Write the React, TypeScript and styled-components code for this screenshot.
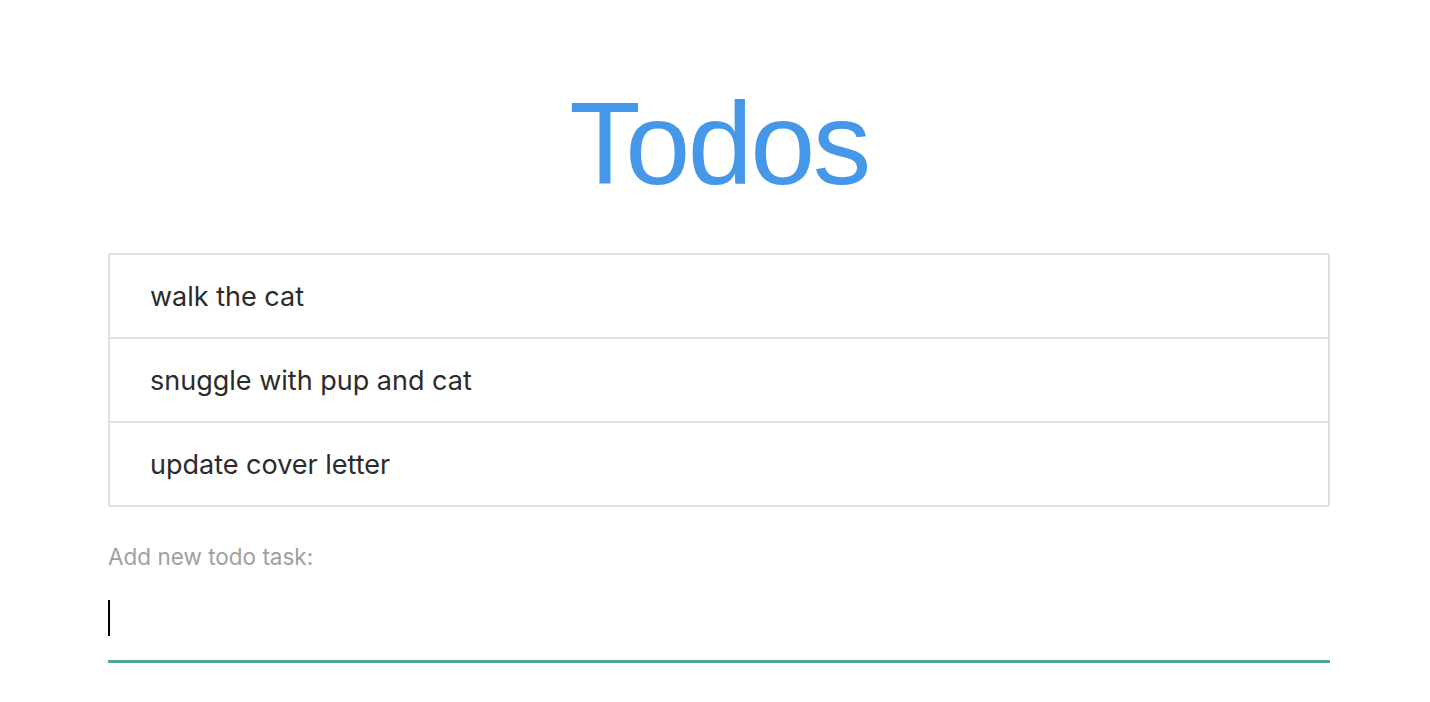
import React, { useEffect, useRef, useState } from "react";
import styled, { createGlobalStyle } from "styled-components";

const GlobalStyle = createGlobalStyle`
  html, body {
    margin: 0;
    padding: 0;
    background: #ffffff;
    font-family: Inter, "Liberation Sans", Arial, sans-serif;
  }
`;

const Page = styled.div`
  padding: 85px 100px 0 108px;
`;

const Title = styled.h1`
  margin: 0 0 51px;
  text-align: center;
  font-family: "Liberation Sans", Arial, sans-serif;
  font-size: 117px;
  font-weight: 400;
  line-height: 117px;
  letter-spacing: -2.5px;
  color: #4597ea;
`;

const List = styled.ul`
  list-style: none;
  margin: 0;
  padding: 0;
  border: 2px solid #e0e0e0;
  border-radius: 3px;
`;

const Item = styled.li`
  height: 82px;
  display: flex;
  align-items: center;
  padding: 0 40px;
  font-size: 27px;
  color: #2b2b2b;
  & + & {
    border-top: 2px solid #e0e0e0;
  }
`;

const Form = styled.form`
  margin-top: 37px;
  display: flex;
  flex-direction: column;
`;

const Label = styled.label`
  font-size: 22.5px;
  line-height: 26px;
  color: #a0a0a0;
`;

const InputWrap = styled.div`
  position: relative;
  margin-top: 24px;
  display: flex;
`;

const Input = styled.input`
  flex: 1;
  box-sizing: content-box;
  margin: 0;
  height: 48px;
  padding: 0 0 18px;
  border: none;
  border-bottom: 3px solid #4fa59a;
  outline: none;
  font-size: 28px;
  font-family: inherit;
  caret-color: #000;
  color: #222;
  background: transparent;
`;

const Caret = styled.span`
  position: absolute;
  left: 0;
  top: 6px;
  width: 2px;
  height: 36px;
  background: #000;
  pointer-events: none;
`;

const todos = ["walk the cat", "snuggle with pup and cat", "update cover letter"];

export default function App() {
  const [value, setValue] = useState("");
  const inputRef = useRef<HTMLInputElement>(null);

  useEffect(() => {
    inputRef.current?.focus();
  }, []);

  return (
    <>
      <GlobalStyle />
      <Page>
        <Title>Todos</Title>
        <List>
          {todos.map((t) => (
            <Item key={t}>{t}</Item>
          ))}
        </List>
        <Form onSubmit={(e) => e.preventDefault()}>
          <Label htmlFor="new-todo">Add new todo task:</Label>
          <InputWrap>
            <Input
              id="new-todo"
              ref={inputRef}
              value={value}
              onChange={(e) => setValue(e.target.value)}
            />
            {value === "" && <Caret />}
          </InputWrap>
        </Form>
      </Page>
    </>
  );
}
